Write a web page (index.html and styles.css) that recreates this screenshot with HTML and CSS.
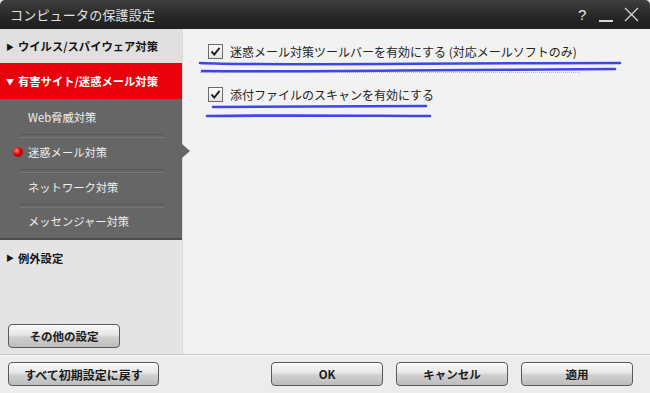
FILE: index.html
```html
<!DOCTYPE html>
<html lang="ja">
<head>
    <meta charset="UTF-8">
    <title>コンピュータの保護設定</title>
    <link rel="stylesheet" href="styles.css">
</head>
<body>
<div class="window">
    <div class="titlebar">
        <span class="title">コンピュータの保護設定</span>
        <div class="controls">
            <span class="help">?</span>
            <span class="minimize"></span>
            <svg class="close" width="15" height="15" viewBox="0 0 15 15">
                <path d="M1 1 L14 14 M14 1 L1 14" stroke="#d8d8d8" stroke-width="1.2" fill="none"/>
            </svg>
        </div>
    </div>

    <div class="content">
        <div class="sidebar">
            <div class="nav-item closed"><span class="arrow">&#9654;</span>ウイルス/スパイウェア対策</div>
            <div class="nav-item open"><span class="arrow">&#9660;</span>有害サイト/迷惑メール対策</div>
            <ul class="sub-list">
                <li>Web脅威対策</li>
                <li class="current"><span class="dot"></span>迷惑メール対策<span class="pointer"></span></li>
                <li>ネットワーク対策</li>
                <li>メッセンジャー対策</li>
            </ul>
            <div class="nav-item closed"><span class="arrow">&#9654;</span>例外設定</div>
            <div class="sidebar-bottom">
                <button class="btn btn-other">その他の設定</button>
            </div>
        </div>

        <div class="main">
            <label class="option">
                <span class="check"><svg width="11" height="11" viewBox="0 0 11 11"><path d="M1.5 5.5 L4.3 8.6 L9.6 1.8" stroke="#1e1e1e" stroke-width="1.9" fill="none"/></svg></span>
                迷惑メール対策ツールバーを有効にする (対応メールソフトのみ)
            </label>
            <div class="dots"></div>
            <label class="option">
                <span class="check"><svg width="11" height="11" viewBox="0 0 11 11"><path d="M1.5 5.5 L4.3 8.6 L9.6 1.8" stroke="#1e1e1e" stroke-width="1.9" fill="none"/></svg></span>
                添付ファイルのスキャンを有効にする
            </label>
        </div>
    </div>

    <div class="footer">
        <button class="btn btn-reset">すべて初期設定に戻す</button>
        <div class="footer-right">
            <button class="btn btn-main">OK</button>
            <button class="btn btn-main">キャンセル</button>
            <button class="btn btn-main">適用</button>
        </div>
    </div>

    <!-- 手書きの下線 -->
    <svg class="marks" width="650" height="393" viewBox="0 0 650 393">
        <g stroke="#2a35e8" stroke-width="2.6" fill="none" stroke-linecap="round" opacity="0.9">
            <path d="M200 63 C 260 66, 420 63, 620 63"/>
            <path d="M202 71 C 300 72, 420 70, 470 70 S 580 69, 615 69"/>
            <path d="M213 107 C 300 106, 380 106, 426 106"/>
            <path d="M207 116 C 300 115, 380 116, 430 116"/>
        </g>
    </svg>
</div>
</body>
</html>
```

FILE: styles.css
```css
* {
    margin: 0;
    padding: 0;
    box-sizing: border-box;
}

body {
    font-family: "Noto Sans CJK JP", "Liberation Sans", sans-serif;
    background: #ececec;
}

.window {
    width: 650px;
    height: 393px;
    display: flex;
    flex-direction: column;
    position: relative;
    background: #ececec;
    overflow: hidden;
}

/* タイトルバー */
.titlebar {
    height: 29px;
    flex: none;
    display: flex;
    align-items: center;
    justify-content: space-between;
    background: linear-gradient(#3e3e3e, #262626 60%, #1f1f1f);
    border-top-left-radius: 5px;
    border-top-right-radius: 5px;
    padding: 0 10px;
}

.title {
    color: #e2e2e2;
    font-size: 13px;
    letter-spacing: 0.2px;
}

.controls {
    display: flex;
    align-items: center;
    gap: 11px;
    padding-right: 1px;
}

.help {
    color: #e8e8e8;
    font-size: 15px;
    font-family: "Liberation Sans", sans-serif;
    width: 10px;
}

.minimize {
    width: 14px;
    height: 2px;
    background: #d8d8d8;
    margin-top: 12px;
}

/* 本体 */
.content {
    flex: 1;
    display: flex;
    min-height: 0;
}

.sidebar {
    width: 183px;
    flex: none;
    display: flex;
    flex-direction: column;
    background: #e4e4e4;
    border-right: 1px solid #dcdcdc;
}

.nav-item {
    height: 35px;
    display: flex;
    align-items: center;
    padding-left: 6px;
    font-size: 11.3px;
    font-weight: bold;
    color: #151515;
}

.nav-item .arrow {
    font-size: 8px;
    width: 12px;
}

.nav-item.closed:first-child {
    background: #e0e0e0;
    height: 34px;
}

.nav-item.open {
    height: 36px;
    background: #e8000b;
    color: #fff;
}

.sub-list {
    list-style: none;
    background: #666;
    border-bottom: 2px solid #4c4c4c;
}

.sub-list li {
    height: 35px;
    display: flex;
    align-items: center;
    padding-left: 28px;
    font-size: 11.3px;
    color: #f0f0f0;
    position: relative;
}

.sub-list li + li::before {
    content: "";
    position: absolute;
    left: 20px;
    right: 18px;
    top: 0;
    height: 2px;
    border-top: 1px solid #575757;
    border-bottom: 1px solid #777;
}

.sub-list li:last-child {
    height: 34px;
}

.dot {
    position: absolute;
    left: 13px;
    top: 13px;
    width: 10px;
    height: 10px;
    border-radius: 50%;
    background: radial-gradient(circle at 35% 35%, #ff8080, #e00000 45%, #8a0000);
}

.pointer {
    position: absolute;
    right: -8px;
    top: 10px;
    width: 0;
    height: 0;
    border-top: 7px solid transparent;
    border-bottom: 7px solid transparent;
    border-left: 8px solid #666;
}

.sidebar-bottom {
    flex: 1;
    display: flex;
    align-items: flex-end;
    padding: 0 0 6px 8px;
}

.main {
    flex: 1;
    background: #f2f2f2;
    padding: 14px 0 0 17px;
}

.option {
    display: flex;
    align-items: center;
    gap: 7px;
    height: 16px;
    margin-left: 8px;
    font-size: 12px;
    color: #222;
}

.check {
    width: 15px;
    height: 15px;
    border: 1px solid #6a6a6a;
    background: linear-gradient(#fdfdfd, #e2e2e2);
    display: flex;
    align-items: center;
    justify-content: center;
}

.dots {
    width: 380px;
    height: 1px;
    border-top: 1px dotted #b8b8b8;
    margin: 13px 0 13px 0;
}

/* ボタン */
.btn {
    font-family: "Noto Sans CJK JP", "Liberation Sans", sans-serif;
    font-size: 11.5px;
    font-weight: bold;
    color: #1a1a1a;
    height: 24px;
    border: 1px solid #5a5a5a;
    border-radius: 4px;
    background: linear-gradient(#fafafa, #e6e6e6 45%, #cfcfcf 55%, #bdbdbd);
    box-shadow: inset 0 1px 0 #fff;
}

.btn-other {
    width: 112px;
}

.footer {
    height: 39px;
    flex: none;
    display: flex;
    align-items: center;
    justify-content: space-between;
    padding: 0 17px 0 8px;
    border-top: 1px solid #c4c4c4;
    box-shadow: inset 0 1px 0 #fafafa;
    background: #ececec;
}

.btn-reset {
    width: 151px;
    font-size: 12px;
}

.footer-right {
    display: flex;
    gap: 13px;
}

.btn-main {
    width: 112px;
}

.marks {
    position: absolute;
    top: 0;
    left: 0;
    pointer-events: none;
}
```
